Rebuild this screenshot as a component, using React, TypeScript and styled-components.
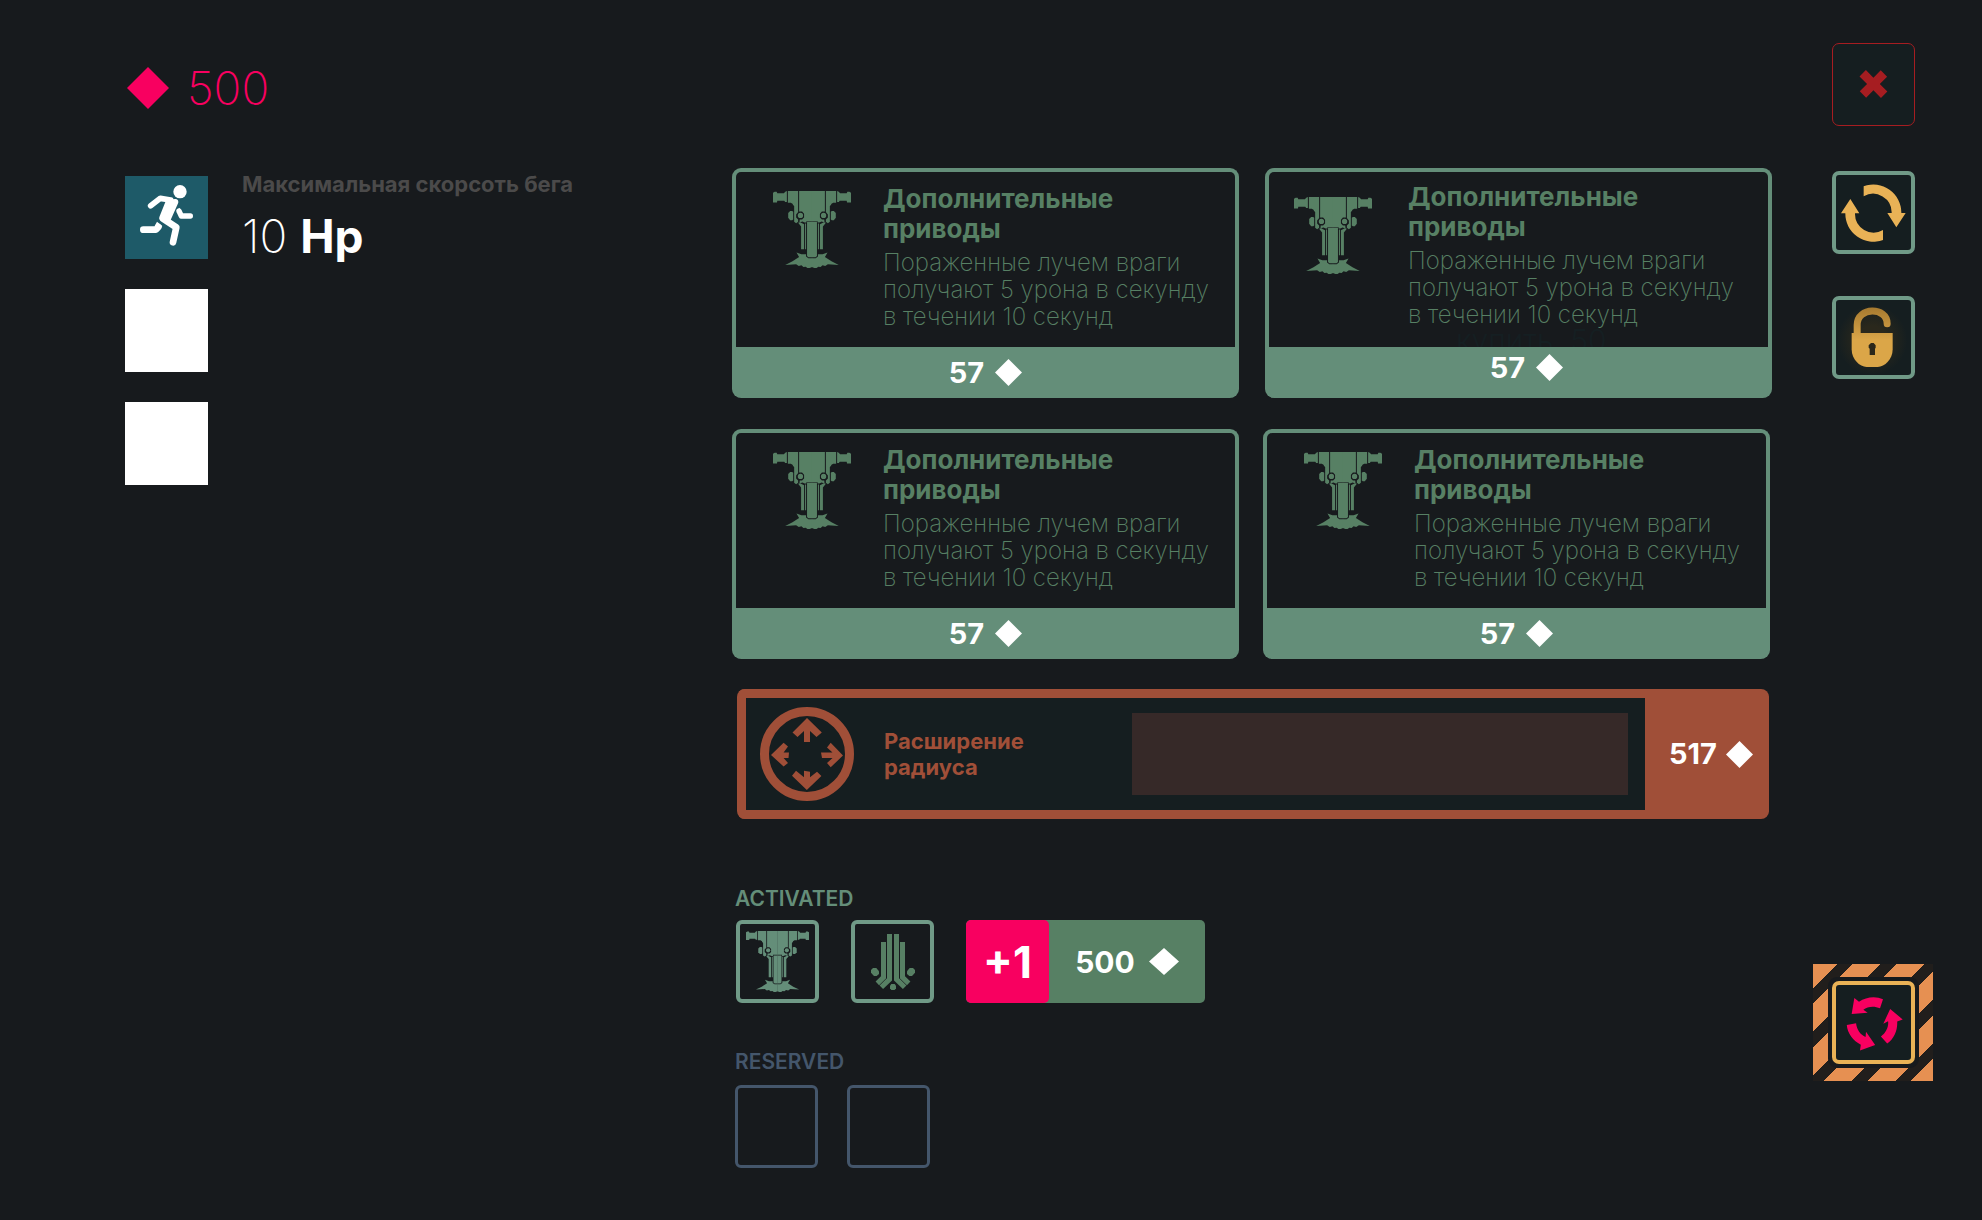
import React from "react";
import styled, { createGlobalStyle } from "styled-components";

const color = {
  page: "#171a1d",
  inset: "#151e20",
  green: "#648e79",
  leaf: "#578064",
  frame: "#709a87",
  rust: "#a04f38",
  rustDim: "#362928",
  pink: "#f80060",
  amber: "#e9b256",
  red: "#a61d21",
  slate: "#44566b",
  muted: "#4b4a4a",
  teal: "#1e5a68",
};

const GlobalStyle = createGlobalStyle`
  *, *::before, *::after { box-sizing: border-box; }
  body { margin: 0; background: ${color.page}; font-family: Inter, "Noto Sans", sans-serif; }
  h2, h3, p, ul { margin: 0; padding: 0; }
  ul { list-style: none; }
  svg { display: block; flex: none; }
  button { font: inherit; margin: 0; padding: 0; border: 0; cursor: pointer; }
`;

const Page = styled.div`
  display: grid;
  grid-template-columns: minmax(300px, 607px) minmax(0, 1fr) 120px;
  min-height: 100vh;
  padding: 0 49px 0 125px;
`;

const StatsColumn = styled.aside`
  padding-top: 63px;
`;

const Balance = styled.div`
  display: flex;
  align-items: center;
  gap: 18px;
  height: 50px;
  padding-left: 2px;
  margin-bottom: 63px;
  color: ${color.pink};
  font-size: 46px;
  font-weight: 200;
`;

const StatList = styled.ul`
  display: flex;
  flex-direction: column;
  gap: 30px;
`;

const StatRow = styled.li`
  display: flex;
  align-items: center;
  gap: 34px;
  height: 83px;
`;

const StatTile = styled.div<{ $filled?: boolean }>`
  flex: none;
  width: 83px;
  height: 83px;
  background: ${(p) => (p.$filled ? color.teal : "#fff")};
`;

const StatName = styled.h3`
  margin-bottom: 14px;
  color: ${color.muted};
  font-size: 22px;
  font-weight: 700;
  line-height: 26px;
  white-space: nowrap;
`;

const StatValue = styled.p`
  padding-bottom: 4px;
  color: #fff;
  font-size: 46px;
  font-weight: 200;
  line-height: 50px;

  strong { font-weight: 700; }
`;

const Shop = styled.main`
  padding-top: 168px;
  margin-right: 41px;
`;

const CardRow = styled.div<{ $gap: number; $inset?: number }>`
  display: flex;
  gap: ${(p) => p.$gap}px;
  margin: 0 ${(p) => p.$inset ?? 0}px 31px 0;
`;

const Card = styled.article`
  flex: 1 1 0;
  min-width: 0;
  border: 4px solid ${color.green};
  border-bottom: 0;
  border-radius: 9px;
  background: ${color.green};
`;

const CardBody = styled.div<{ $shifted?: boolean }>`
  position: relative;
  display: flex;
  align-items: flex-start;
  gap: ${(p) => (p.$shifted ? 36 : 32)}px;
  height: 175px;
  padding: ${(p) => (p.$shifted ? "10px 0 0 25px" : "12px 0 0 37px")};
  border-radius: 5px 5px 0 0;
  background: ${color.page};
  overflow: hidden;
`;

const CardIcon = styled.div<{ $shifted?: boolean }>`
  padding-top: ${(p) => (p.$shifted ? 15 : 7)}px;
  color: ${color.leaf};
`;

const CardText = styled.div`
  min-width: 0;
  color: ${color.leaf};
`;

const CardTitle = styled.h2`
  max-width: 260px;
  margin-bottom: 5px;
  font-size: 26px;
  font-weight: 700;
  line-height: 30px;
`;

const CardInfo = styled.p`
  font-size: 24px;
  font-weight: 200;
  line-height: 27px;
  white-space: pre-line;
`;

const GhostLabel = styled.span`
  position: absolute;
  left: 187px;
  top: 153px;
  color: #151f22;
  font-size: 30px;
  font-weight: 300;
  line-height: 30px;
  white-space: pre;
`;

const BuyButton = styled.button<{ $shifted?: boolean }>`
  display: flex;
  align-items: center;
  justify-content: center;
  gap: 11px;
  width: 100%;
  height: 51px;
  padding: ${(p) => (p.$shifted ? "0 0 10px 16px" : "0")};
  background: transparent;
  color: #fff;
  font-size: 29px;
  font-weight: 700;
  line-height: 30px;
`;

const RadiusPanel = styled.article`
  display: flex;
  height: 130px;
  margin: -1px 3px 68px 5px;
  border: 9px solid ${color.rust};
  border-right: 0;
  border-radius: 8px;
  background: ${color.rust};
`;

const RadiusBody = styled.div`
  flex: 1;
  min-width: 0;
  display: flex;
  align-items: center;
  gap: 30px;
  padding: 0 17px 0 14px;
  background: ${color.inset};
`;

const RadiusTitle = styled.h2`
  width: 218px;
  padding-right: 40px;
  color: ${color.rust};
  font-size: 22px;
  font-weight: 700;
  line-height: 26px;
`;

const RadiusField = styled.div`
  flex: 1;
  height: 82px;
  background: ${color.rustDim};
`;

const RadiusBuy = styled(BuyButton)`
  width: 124px;
  height: 112px;
  gap: 9px;
  padding-left: 8px;
`;

const Group = styled.section<{ $gap: number }>`
  display: flex;
  flex-direction: column;
  gap: ${(p) => p.$gap}px;
  margin: 0 0 47px 3px;
`;

const GroupLabel = styled.h2<{ $tone: string }>`
  color: ${(p) => p.$tone};
  font-size: 21px;
  font-weight: 600;
  line-height: 24px;
`;

const SlotRow = styled.div<{ $gap: number; $inset?: number }>`
  display: flex;
  gap: ${(p) => p.$gap}px;
  padding-left: ${(p) => p.$inset ?? 0}px;
`;

const Slot = styled.div<{ $tone: string; $thin?: boolean }>`
  display: grid;
  place-items: center;
  width: 83px;
  height: 83px;
  border: ${(p) => (p.$thin ? 3 : 4)}px solid ${(p) => p.$tone};
  border-radius: 6px;
  color: ${color.green};
`;

const AddSlot = styled.button`
  display: flex;
  width: 239px;
  height: 83px;
  border-radius: 5px;
  background: ${color.leaf};
  color: #fff;
  font-weight: 700;
`;

const AddCount = styled.span`
  display: grid;
  place-items: center;
  width: 83px;
  height: 83px;
  border-radius: 5px;
  background: ${color.pink};
  font-size: 44px;
`;

const AddPrice = styled.span`
  flex: 1;
  display: flex;
  align-items: center;
  justify-content: center;
  gap: 14px;
  height: 83px;
  font-size: 30px;
`;

const Actions = styled.nav`
  display: flex;
  flex-direction: column;
  align-items: center;
  padding: 43px 0 139px;
`;

const IconButton = styled.button<{ $tone: string; $thin?: boolean; $space?: number }>`
  display: grid;
  place-items: center;
  flex: none;
  width: 83px;
  height: 83px;
  margin-bottom: ${(p) => p.$space ?? 0}px;
  border: ${(p) => (p.$thin ? 1 : 4)}px solid ${(p) => p.$tone};
  border-radius: 7px;
  background: ${color.inset};
  overflow: hidden;
`;

const Hazard = styled.div`
  display: grid;
  place-items: center;
  width: 120px;
  height: 117px;
  margin-top: auto;
  background: repeating-linear-gradient(
    135deg,
    #e69052 0 17px,
    #211e1c 17px 28px,
    #e69052 28px 31px
  );
`;

const HazardRing = styled.div`
  padding: 4px;
  border-radius: 9px;
  background: ${color.page};
`;

const Diamond = ({ w = 27, h = 27 }: { w?: number; h?: number }) => (
  <svg width={w} height={h} viewBox="0 0 20 20" preserveAspectRatio="none" fill="currentColor" aria-hidden="true">
    <path d="M10 0 20 10 10 20 0 10Z" />
  </svg>
);

const DrillHalf = () => (
  <>
    <path d="M38 38 43 35H49L51 40H71L75 35 80 33V66H75L72 62H51L50 67H38Z" />
    <path d="M83 33H114V96L108 103V112L114 118V125L108 129 102 125V78L98 74V72L92 68H83Z" />
    <path d="M99 95V118L96 120H90L84 113V99L90 93H96Z" />
    <circle cx="121" cy="106" r="8" />
    <path d="M117 33H156.500V123H139V127H134L127 124 118 127 119 118H126L132 112V101L126 94H117Z" />
    <path d="M114 128 120 126 132 132V207H123V139Z" />
    <path d="M135 130H138V207H135Z" />
    <path d="M141 125H156.500V231H145L141 227Z" />
    <path d="M156.500 234V260L149 263H142L137 259 130 260 124 255 116 257 108 252 75 254 97 243 117 230 109 217 124 222H138V229L145 234Z" />
  </>
);

const Drill = ({ w = 78, h = 77 }: { w?: number; h?: number }) => (
  <svg width={w} height={h} viewBox="38 33 236 230" preserveAspectRatio="none" fill="currentColor" aria-hidden="true">
    <DrillHalf />
    <g transform="translate(312 0) scale(-1 1)">
      <DrillHalf />
    </g>
  </svg>
);

const Runner = () => (
  <svg width="83" height="83" viewBox="75 408 249 249" fill="none" stroke="#fff" strokeLinecap="round" strokeLinejoin="round" aria-hidden="true">
    <circle cx="240" cy="455" r="20" fill="#fff" stroke="none" />
    <path d="M152 497 181 475 212 480" strokeWidth="17" />
    <path d="M205 488 226 486 203 538 187 533Z" fill="#fff" strokeWidth="18" />
    <path d="M189 536 229 562 219 607" strokeWidth="20" />
    <path d="M130 569H168L175 561" strokeWidth="20" />
    <path d="M171 545 187 558 178 570 164 558Z" fill="#fff" stroke="none" />
    <path d="M237 513 244 528H271" strokeWidth="16" />
    <path d="M238 503 230 517 238 523 247 520Z" fill="#fff" stroke="none" />
  </svg>
);

const RadiusIcon = () => (
  <svg width="94" height="94" viewBox="0 0 94 94" fill={color.rust} aria-hidden="true">
    <circle cx="47" cy="47" r="42.500" fill="none" stroke={color.rust} strokeWidth="9" />
    <path d="M47 11 61.800 25.500 56.500 30 50 24V35H44V24L37.500 30 32.500 25.500Z" />
    <path d="M83 48.500 70.700 60.300 67 56 72.500 51H62L61 45.500H72.500L67 40.500 70.700 35.700Z" />
    <path d="M11 48 23.600 35.700 28 39.500 23.600 45.500H29L28.500 51H23.600L28 56 23.600 59.500Z" />
    <path d="M46.800 83 32 68.700 36 63.700 44 70.300V63.700L50 64.700V70.300L57 64.700 61.400 69Z" />
  </svg>
);

const RootsIcon = () => (
  <svg width="44" height="56" viewBox="450 156 132 168" fill="none" stroke={color.leaf} strokeWidth="15" aria-hidden="true">
    <path d="M505.500 156V292L481 316M487.500 180V286L469 304" />
    <path d="M526.500 156V292L551 316M544.500 180V286L563 304" />
    <g fill={color.leaf} stroke="none">
      <path d="M456 258H466L474 268V276L467 282H459L450 272V264Z" />
      <path d="M576 258H566L558 268V276L565 282H573L582 272V264Z" />
      <path d="M511 306H521L525 311V319L521 324H511L507 319V311Z" />
    </g>
  </svg>
);

const CloseIcon = () => (
  <svg width="75" height="75" viewBox="-112 -112 225 225" fill={color.red} aria-hidden="true">
    <path transform="rotate(45 1 -1)" d="M-45-14H-13V-45H14V-14H46V13H14V44H-13V13H-45Z" />
  </svg>
);

const RefreshIcon = () => {
  const arrow = "M192 469A84 84 0 0 1 305 549H318L290 592 263 549H276A56 56 0 0 0 192 499Z";
  return (
    <svg width="75" height="75" viewBox="109 435 225 225" fill={color.amber} aria-hidden="true">
      <path d={arrow} />
      <path d={arrow} transform="rotate(180 221 549.500)" />
    </svg>
  );
};

const LockIcon = () => (
  <svg width="75" height="75" viewBox="109 810 225 225" aria-hidden="true">
    <defs>
      <linearGradient id="brass" gradientUnits="userSpaceOnUse" x1="0" y1="833" x2="0" y2="930">
        <stop offset="0" stopColor="#a67a30" />
        <stop offset="1" stopColor="#dba648" />
      </linearGradient>
      <radialGradient id="glow">
        <stop offset="0.400" stopColor="#2a281c" />
        <stop offset="1" stopColor={color.inset} />
      </radialGradient>
    </defs>
    <circle cx="218" cy="930" r="105" fill="url(#glow)" />
    <path d="M172.500 915V885C172.500 830 262.500 830 262.500 881" fill="none" stroke="url(#brass)" strokeWidth="21" strokeLinecap="round" />
    <path d="M156 909H279V958C279 988 255 1011 234 1011H201C180 1011 156 988 156 958Z" fill="url(#brass)" />
    <path d="M214 939H222L228 946V953L226 956V975H210V956L207 953V946Z" fill="#2b271a" />
  </svg>
);

const CycleIcon = () => {
  const arrow = "M246 148C224 137 195 141 174 155L160 144 152 192 200 188 187 179C200 169 220 167 237 175Z";
  return (
    <svg width="75" height="75" viewBox="105 105 225 225" fill={color.pink} aria-hidden="true">
      {[0, 120, 240].map((turn) => (
        <path key={turn} d={arrow} transform={`rotate(${turn} 214 218)`} />
      ))}
    </svg>
  );
};

const UpgradeCard = ({ shifted, ghost }: { shifted?: boolean; ghost?: string }) => (
  <Card>
    <CardBody $shifted={shifted}>
      <CardIcon $shifted={shifted}>
        <Drill />
      </CardIcon>
      <CardText>
        <CardTitle>Дополнительные приводы</CardTitle>
        <CardInfo>{"Пораженные лучем враги\nполучают 5 урона в секунду\nв течении 10 секунд"}</CardInfo>
      </CardText>
      {ghost && <GhostLabel>{ghost}</GhostLabel>}
    </CardBody>
    <BuyButton type="button" $shifted={shifted}>
      57
      <Diamond />
    </BuyButton>
  </Card>
);

export default function App() {
  return (
    <>
      <GlobalStyle />
      <Page>
        <StatsColumn>
          <Balance>
            <Diamond w={42} h={42} />
            500
          </Balance>
          <StatList>
            <StatRow>
              <StatTile $filled>
                <Runner />
              </StatTile>
              <div>
                <StatName>Максимальная скорсоть бега</StatName>
                <StatValue>
                  10 <strong>Hp</strong>
                </StatValue>
              </div>
            </StatRow>
            <StatRow>
              <StatTile />
            </StatRow>
            <StatRow>
              <StatTile />
            </StatRow>
          </StatList>
        </StatsColumn>

        <Shop>
          <CardRow $gap={26}>
            <UpgradeCard />
            <UpgradeCard shifted ghost="купить  50" />
          </CardRow>
          <CardRow $gap={24} $inset={2}>
            <UpgradeCard />
            <UpgradeCard />
          </CardRow>
          <RadiusPanel>
            <RadiusBody>
              <RadiusIcon />
              <RadiusTitle>Расширение радиуса</RadiusTitle>
              <RadiusField />
            </RadiusBody>
            <RadiusBuy type="button">
              517
              <Diamond />
            </RadiusBuy>
          </RadiusPanel>

          <Group $gap={9}>
            <GroupLabel $tone={color.green}>ACTIVATED</GroupLabel>
            <SlotRow $gap={32} $inset={1}>
              <Slot $tone={color.frame}>
                <Drill w={63} h={61} />
              </Slot>
              <Slot $tone={color.frame}>
                <RootsIcon />
              </Slot>
              <AddSlot type="button">
                <AddCount>+1</AddCount>
                <AddPrice>
                  500
                  <Diamond w={30} />
                </AddPrice>
              </AddSlot>
            </SlotRow>
          </Group>
          <Group $gap={11}>
            <GroupLabel $tone={color.slate}>RESERVED</GroupLabel>
            <SlotRow $gap={29}>
              <Slot $tone={color.slate} $thin />
              <Slot $tone={color.slate} $thin />
            </SlotRow>
          </Group>
        </Shop>

        <Actions>
          <IconButton type="button" aria-label="Закрыть" $tone={color.red} $thin $space={45}>
            <CloseIcon />
          </IconButton>
          <IconButton type="button" aria-label="Обновить" $tone={color.frame} $space={42}>
            <RefreshIcon />
          </IconButton>
          <IconButton type="button" aria-label="Разблокировать" $tone={color.frame}>
            <LockIcon />
          </IconButton>
          <Hazard>
            <HazardRing>
              <IconButton type="button" aria-label="Переработать" $tone={color.amber}>
                <CycleIcon />
              </IconButton>
            </HazardRing>
          </Hazard>
        </Actions>
      </Page>
    </>
  );
}
